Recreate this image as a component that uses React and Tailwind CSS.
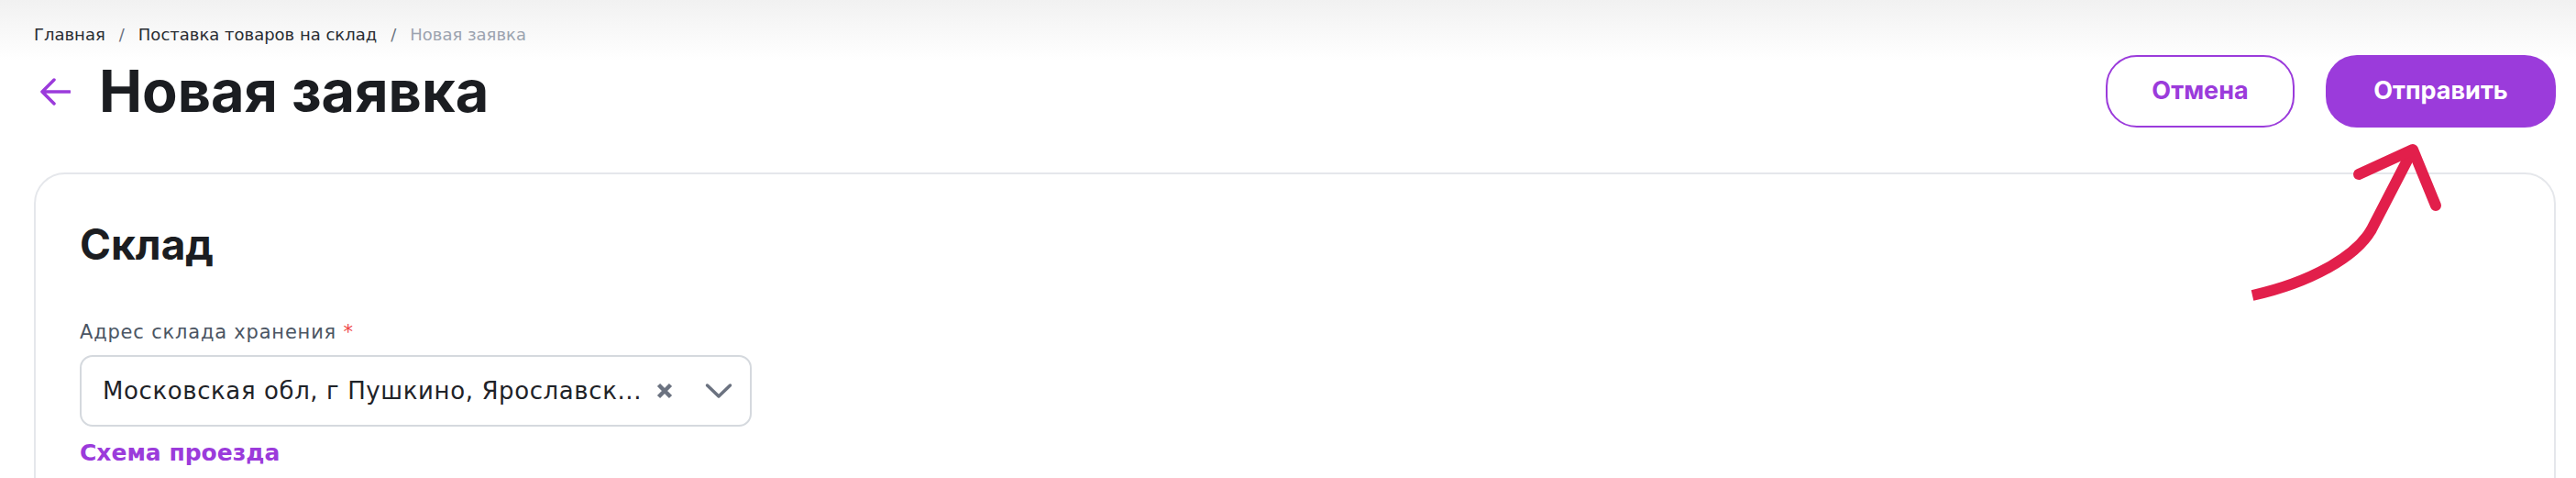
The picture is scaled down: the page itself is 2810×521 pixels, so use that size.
const crumbs = [
  { label: "Главная", active: true },
  { label: "Поставка товаров на склад", active: true },
  { label: "Новая заявка", active: false },
];

function BackArrow() {
  return (
    <svg width="34" height="32" viewBox="0 0 34 32" fill="none" className="ml-[6px] shrink-0">
      <path
        d="M3 16H33M16 3L3 16L16 29"
        stroke="#9b3bdb"
        strokeWidth="3.5"
        strokeLinecap="round"
        strokeLinejoin="round"
      />
    </svg>
  );
}

function Pointer() {
  return (
    <svg
      width="240"
      height="190"
      viewBox="0 0 240 190"
      fill="none"
      className="pointer-events-none absolute left-[2440px] top-[150px]"
    >
      <path d="M17 172C80 158 130 130 147 100L192 13" stroke="#e21f4b" strokeWidth="12" />
      <path
        d="M133 40L192 13L217 74"
        stroke="#e21f4b"
        strokeWidth="12"
        strokeLinecap="round"
        strokeLinejoin="round"
      />
    </svg>
  );
}

export default function App() {
  return (
    <div className="relative h-[521px] w-full overflow-hidden bg-[linear-gradient(to_bottom,#f1f1f1_0px,#ffffff_66px)] pl-[37px] pr-[22px] font-['DejaVu_Sans',sans-serif]">
      <nav className="flex items-center pt-[26px] text-[18px] leading-[24px]">
        {crumbs.map((c, i) => (
          <div key={c.label} className="flex items-center">
            {i > 0 && <span className="mx-[15px] text-[#6b7280]">/</span>}
            <span className={c.active ? "text-[#2a2d33]" : "text-[#9ca3af]"}>{c.label}</span>
          </div>
        ))}
      </nav>

      <div className="mt-[10px] flex h-[79px] items-center justify-between">
        <div className="flex items-center gap-[31px]">
          <BackArrow />
          <h1 className="font-['Inter',sans-serif] text-[63px] leading-none font-bold text-[#1b1d21]">
            Новая заявка
          </h1>
        </div>
        <div className="flex items-center gap-[34px] font-['Inter',sans-serif] text-[27px] font-bold">
          <button className="flex h-[79px] w-[206px] items-center justify-center rounded-[34px] border-2 border-[#9b3bdb] bg-white text-[#9b3bdb]">
            Отмена
          </button>
          <button className="flex h-[79px] w-[251px] items-center justify-center rounded-[34px] bg-[#9b3bdb] text-white">
            Отправить
          </button>
        </div>
      </div>

      <section className="mt-[49px] h-[400px] rounded-[34px] border-2 border-[#e5e7eb] bg-white pt-[53px] pl-[48px]">
        <h2 className="font-['Inter',sans-serif] text-[46px] leading-none font-bold text-[#1b1d21]">
          Склад
        </h2>

        <label className="mt-[61px] block text-[21px] leading-[24px] tracking-[0.8px] text-[#4b5563]">
          Адрес склада хранения <span className="text-[#ef4444]">*</span>
        </label>

        <div className="mt-[13px] flex h-[78px] w-[733px] items-center rounded-[14px] border-2 border-[#d5d9de] pr-[19px] pl-[23px]">
          <span className="flex-1 truncate text-[26px] leading-[30px] tracking-[0.6px] text-[#1f2328]">
            Московская обл, г Пушкино, Ярославск...
          </span>
          <svg width="18" height="18" viewBox="0 0 18 18" fill="none" className="ml-[10px] shrink-0">
            <path d="M2.5 2.5L15.5 15.5M15.5 2.5L2.5 15.5" stroke="#6b7280" strokeWidth="4.5" />
          </svg>
          <svg width="30" height="18" viewBox="0 0 30 18" fill="none" className="ml-[35px] shrink-0">
            <path d="M2.5 3L15 15L27.5 3" stroke="#6b7280" strokeWidth="3.5" strokeLinecap="round" strokeLinejoin="round" />
          </svg>
        </div>

        <a className="mt-[14px] block text-[25px] leading-[30px] font-bold text-[#9b3bdb]">Схема проезда</a>
      </section>

      <Pointer />
    </div>
  );
}
